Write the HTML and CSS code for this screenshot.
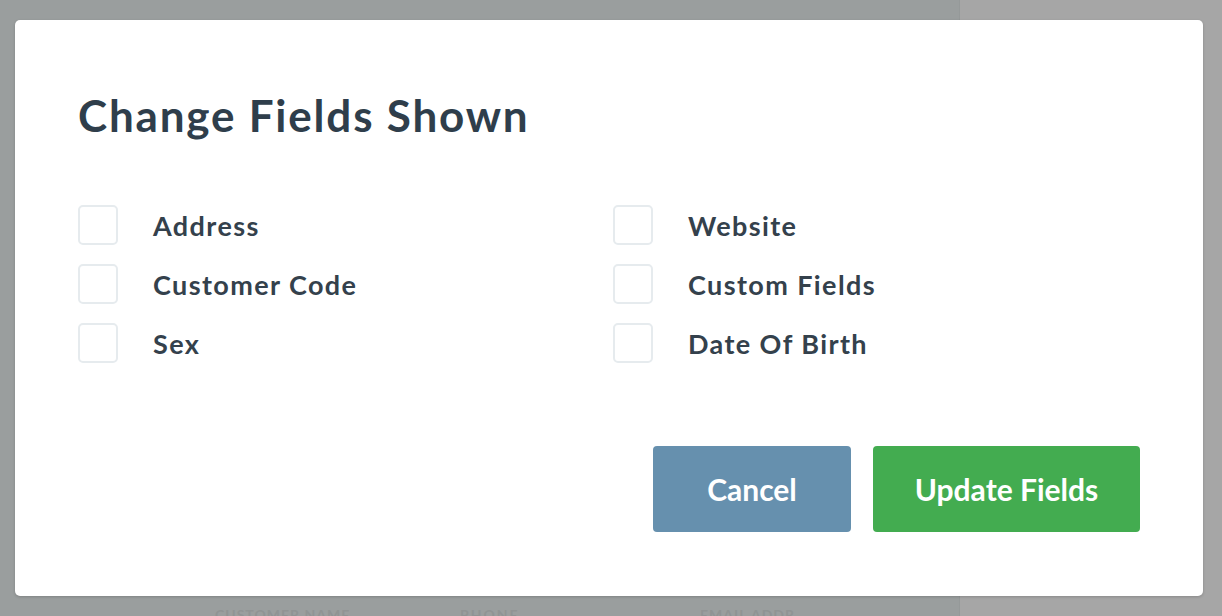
FILE: index.html
```html
<!DOCTYPE html>
<html>
<head>
<meta charset="utf-8">
<link rel="stylesheet" href="styles.css">
</head>
<body>
<div class="backdrop">
  <div class="page-main">
    <div class="ghost-row">
      <span class="ghost g1">CUSTOMER NAME</span>
      <span class="ghost g2">PHONE</span>
      <span class="ghost g3">EMAIL ADDR</span>
    </div>
  </div>
  <div class="page-side"></div>
</div>
<div class="modal">
  <h1 class="modal-title">Change Fields Shown</h1>
  <div class="fields">
    <label class="field"><span class="box"></span><span class="label">Address</span></label>
    <label class="field"><span class="box"></span><span class="label">Website</span></label>
    <label class="field"><span class="box"></span><span class="label">Customer Code</span></label>
    <label class="field"><span class="box"></span><span class="label">Custom Fields</span></label>
    <label class="field"><span class="box"></span><span class="label">Sex</span></label>
    <label class="field"><span class="box"></span><span class="label">Date Of Birth</span></label>
  </div>
  <div class="actions">
    <button class="btn btn-cancel">Cancel</button>
    <button class="btn btn-update">Update Fields</button>
  </div>
</div>
</body>
</html>
```
FILE: styles.css
```css
* { box-sizing: border-box; }
html, body {
  margin: 0;
  padding: 0;
  width: 1222px;
  height: 616px;
  overflow: hidden;
  font-family: Lato, "Open Sans", sans-serif;
}
.backdrop {
  display: flex;
  width: 1222px;
  height: 616px;
}
.page-main {
  width: 959px;
  background: #9a9e9e;
  position: relative;
}
.page-side {
  flex: 1;
  background: #a6a6a6;
  border-left: 1px solid #959999;
}
.ghost {
  position: absolute;
  top: 606px;
  font-size: 14px;
  font-weight: 700;
  color: #909494;
  letter-spacing: 1px;
}
.g1 { left: 215px; }
.g2 { left: 460px; letter-spacing: 2px; }
.g3 { left: 700px; }
.modal {
  position: absolute;
  left: 15px;
  top: 20px;
  width: 1188px;
  height: 576px;
  background: #ffffff;
  border-radius: 5px;
  box-shadow: 0 1px 3px rgba(0,0,0,0.18);
  padding: 0 63px 0 63px;
  display: flex;
  flex-direction: column;
}
.modal-title {
  margin: 68px 0 0 0;
  font-size: 44px;
  line-height: 54px;
  font-weight: 700;
  letter-spacing: 1.8px;
  color: #2f3e4b;
}
.fields {
  margin-top: 63px;
  display: grid;
  grid-template-columns: 535px 1fr;
  row-gap: 19px;
}
.field {
  display: flex;
  align-items: center;
  height: 40px;
}
.box {
  width: 40px;
  height: 40px;
  border: 2px solid #e6ebee;
  border-radius: 5px;
  flex: none;
}
.label {
  margin-left: 35px;
  font-size: 27px;
  font-weight: 700;
  letter-spacing: 1.4px;
  color: #34414c;
}
.actions {
  margin-top: 83px;
  display: flex;
  justify-content: flex-end;
  gap: 22px;
}
.btn {
  height: 86px;
  border: none;
  border-radius: 4px;
  color: #ffffff;
  font-family: Lato, "Open Sans", sans-serif;
  font-size: 30px;
  font-weight: 700;
  padding: 0;
}
.btn-cancel {
  width: 198px;
  background: #6690ae;
}
.btn-update {
  width: 267px;
  background: #43ac50;
}
```
